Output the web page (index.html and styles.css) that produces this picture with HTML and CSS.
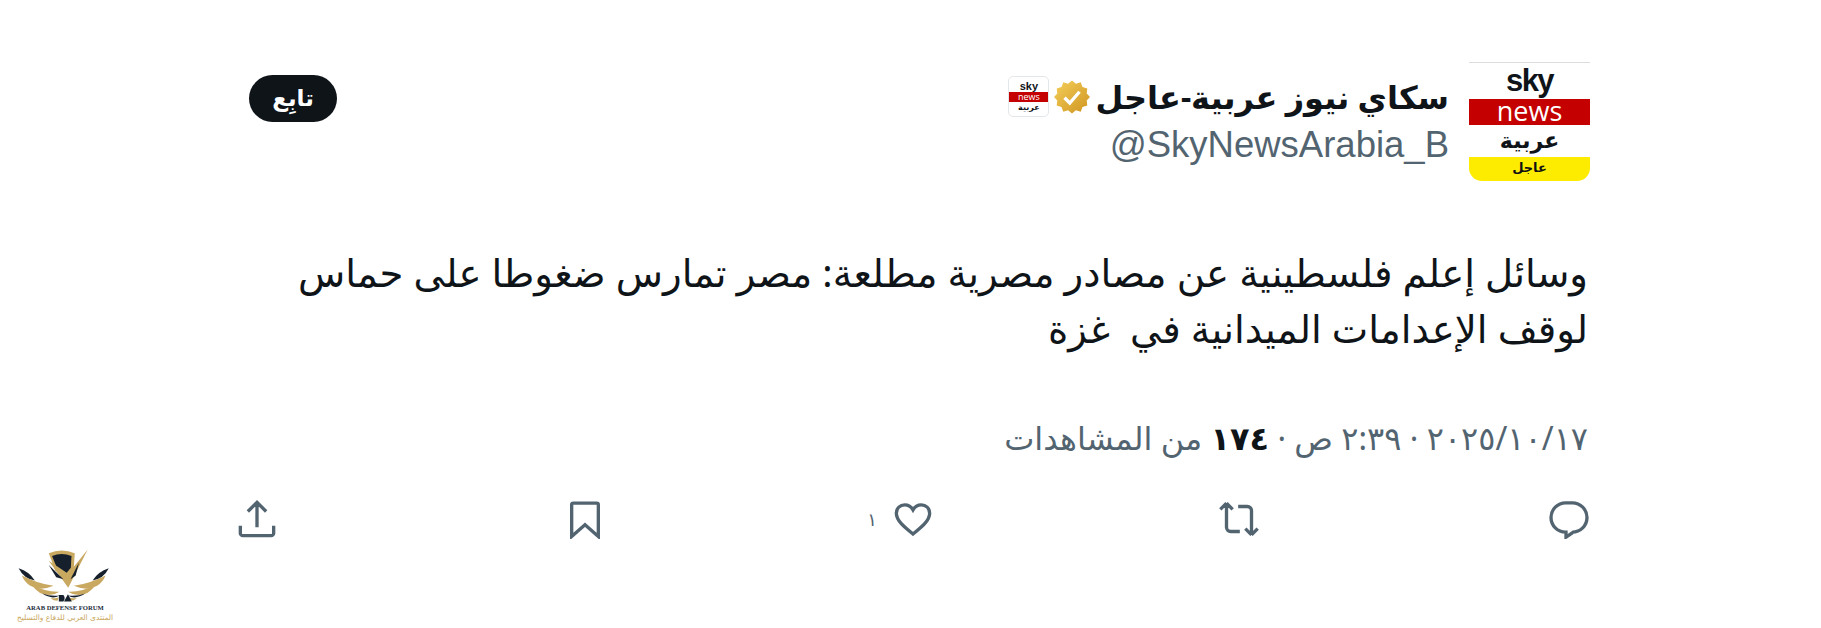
FILE: index.html
```html
<!DOCTYPE html>
<html lang="ar" dir="rtl">
<head>
<meta charset="utf-8">
<title>Tweet</title>
<link rel="stylesheet" href="styles.css">
</head>
<body>
<main class="tweet">
  <header class="head">
    <div class="avatar">
      <div class="av-sky" dir="ltr">sky</div>
      <div class="av-news" dir="ltr">news</div>
      <div class="av-ar">عربية</div>
      <div class="av-tag">عاجل</div>
    </div>
    <div class="who">
      <div class="name-row">
        <span class="name">سكاي نيوز عربية-عاجل</span>
        <svg class="verified" viewBox="0 0 24 24" aria-hidden="true">
          <defs><linearGradient id="gold" x1="0" y1="0" x2="1" y2="1"><stop offset="0" stop-color="#f4cf5a"/><stop offset="1" stop-color="#cf9420"/></linearGradient></defs>
          <path fill="url(#gold)" d="M12 1l2.600 2.100 3.200-.9 1.200 3.100 3.200 1-.4 3.300L24 12l-2.200 2.400.4 3.300-3.200 1-1.200 3.100-3.200-.9L12 23l-2.600-2.100-3.200.9-1.200-3.100-3.200-1 .4-3.300L0 12l2.200-2.400-.4-3.300 3.200-1 1.200-3.100 3.200.9z"/>
          <path fill="none" stroke="#fff" stroke-width="2.200" d="M7 12.500l3.500 3.500L17 8.500"/>
        </svg>
        <div class="mini">
          <div class="mini-sky" dir="ltr">sky</div>
          <div class="mini-news" dir="ltr">news</div>
          <div class="mini-ar">عربية</div>
        </div>
      </div>
      <div class="handle" dir="ltr">@SkyNewsArabia_B</div>
    </div>
    <button class="follow">تابِع</button>
  </header>

  <p class="body-text">وسائل إعلم فلسطينية عن مصادر مصرية مطلعة: مصر تمارس ضغوطا على حماس<br>لوقف الإعدامات الميدانية في&nbsp; غزة</p>

  <div class="meta"><span>١٧&#x200F;/١٠&#x200F;/٢٠٢٥ · ٢:٣٩ ص · </span><b class="views">١٧٤</b><span> من المشاهدات</span></div>

  <nav class="actions">
    <svg class="ico" viewBox="0 0 24 24" aria-hidden="true"><path d="M10 2.300h4a8.800 8.800 0 0 1 0 17.600h-.2v3l-4.400-3h.6a8.800 8.800 0 0 1 0-17.600z" transform="translate(24 0) scale(-1 1)"/></svg>
    <svg class="ico ico-wide" viewBox="0 0 24 24" aria-hidden="true"><path d="M4.500 2.500L.8 6.200M4.500 2.500l3.700 3.700M4.500 3v14a2.500 2.500 0 0 0 2.500 2.500h5.500M11.500 4.500H17A2.500 2.500 0 0 1 19.500 7v14M19.500 21.500L15.800 17.800M19.500 21.500l3.700-3.700"/></svg>
    <div class="like">
      <svg class="ico" viewBox="0 0 24 24" aria-hidden="true"><path d="M12 21C7 17 2 13 2 8.500 2 5.500 4.300 3.500 7 3.500c2 0 3.900 1 5 3 1.100-2 3-3 5-3 2.700 0 5 2 5 5 0 4.500-5 8.500-10 12.500z"/></svg>
      <span class="like-n">١</span>
    </div>
    <svg class="ico" viewBox="0 0 24 24" aria-hidden="true"><path d="M5 2.500h14a1 1 0 0 1 1 1V22.500l-8-7-8 7V3.500a1 1 0 0 1 1-1z"/></svg>
    <svg class="ico" viewBox="0 0 24 24" aria-hidden="true"><path d="M12 2v15M6.500 7.500L12 2l5.500 5.500M2 16v4.500A1.500 1.500 0 0 0 3.500 22h17a1.500 1.500 0 0 0 1.500-1.500V16"/></svg>
  </nav>
</main>

<aside class="forum" dir="ltr">
  <svg class="forum-mark" viewBox="0 0 390 225" aria-hidden="true">
    <defs>
      <g id="wing">
        <path fill="#16202c" d="M52 118Q85 128 102 156Q68 150 52 118z"/>
        <path fill="#c9a860" d="M62 140Q110 165 160 172Q118 190 88 172Q70 160 62 140z"/>
        <path fill="#c9a860" d="M92 168Q135 192 178 190Q150 208 118 194Q102 184 92 168z"/>
        <path fill="#16202c" d="M125 196Q150 205 178 202Q155 216 125 196z"/>
        <path fill="#c9a860" d="M150 210Q160 212 175 208L172 218Q160 218 150 210z"/>
      </g>
    </defs>
    <path fill="#c9a860" d="M145 72Q185 55 225 72L222 120L200 150L165 125z"/>
    <path fill="#16202c" d="M155 80Q185 68 215 80L213 116L197 136L168 112z"/>
    <path fill="#c9a860" d="M145 95L205 178L265 60L205 135z"/>
    <path fill="#16202c" d="M145 108L190 152L168 146z"/>
    <path fill="#16202c" d="M238 100L228 140L212 152z"/>
    <use href="#wing"/>
    <use href="#wing" transform="translate(382 0) scale(-1 1)"/>
    <path fill="#16202c" d="M176 200h14q8 10 0 20h-14zM192 220l12-22 12 22z"/>
  </svg>
  <div class="forum-en">ARAB DEFENSE FORUM</div>
  <div class="forum-ar" dir="rtl">المنتدى العربي للدفاع والتسليح</div>
</aside>
</body>
</html>
```
FILE: styles.css
```css
* { box-sizing: border-box; }
html, body { margin: 0; height: 100%; background: #fff; }
body {
  position: relative;
  height: 628px;
  overflow: hidden;
  font-family: "Noto Sans", "DejaVu Sans", sans-serif;
  color: #0f1419;
}
.tweet {
  width: 1352px;
  margin-right: 231px;
  padding-top: 62px;
}
.head { display: flex; align-items: flex-start; gap: 20px; height: 120px; }
.avatar {
  width: 121px;
  height: 119px;
  flex: none;
  display: flex;
  flex-direction: column;
  align-items: center;
  border-top: 1px solid #ddd;
  overflow: hidden;
}
.av-sky {
  font: 700 31px/36px "Liberation Sans", sans-serif;
  letter-spacing: -1.500px;
  height: 36px;
}
.av-news {
  width: 100%;
  height: 26px;
  background: #c40000;
  color: #fff;
  text-align: center;
  font: 400 27px/24px "Open Sans", sans-serif;
}
.av-ar { font: 700 22px/32px "DejaVu Sans", sans-serif; height: 32px; }
.av-tag {
  width: 100%;
  flex: 1;
  background: #fdec00;
  border-radius: 0 0 13px 13px;
  text-align: center;
  font: 700 13px/22px "DejaVu Sans", sans-serif;
  color: #111;
}
.who { flex: 1; padding-top: 13px; }
.name-row { display: flex; align-items: center; gap: 3px; height: 43px; }
.name { font-size: 32px; font-weight: 700; line-height: 43px; }
.verified { width: 36px; height: 36px; flex: none; margin-right: 2px; }
.mini {
  width: 41px;
  height: 41px;
  border: 1px solid #e4e7ea;
  border-radius: 5px;
  display: flex;
  flex-direction: column;
  align-items: center;
  overflow: hidden;
  margin-right: 2px;
}
.mini-sky { font: 700 11px/13px "Liberation Sans", sans-serif; height: 12px; margin-top: 3px; }
.mini-news { width: 100%; height: 10px; background: #c40000; color: #fff; text-align: center; font: 400 9px/10px "Open Sans", sans-serif; }
.mini-ar { font: 700 8px/12px "DejaVu Sans", sans-serif; }
.handle {
  font: 400 36.500px/40px "Liberation Sans", sans-serif;
  color: #536471;
  margin-top: 7px;
  width: max-content;
}
.follow {
  flex: none;
  width: 88px;
  height: 47px;
  margin-top: 13px;
  margin-left: 11px;
  border: 0;
  border-radius: 24px;
  background: #0f1419;
  color: #fff;
  font: 700 23px/47px "DejaVu Sans", sans-serif;
  padding: 0;
}
.body-text {
  margin: 62px 2px 0 0;
  font-size: 38.700px;
  line-height: 56px;
  font-weight: 400;
}
.meta { margin-top: 60px; font-size: 32px; line-height: 44px; color: #536471; margin-right: 2px; }
.views { color: #0f1419; font-weight: 700; }
.actions {
  display: grid;
  grid-template-columns: repeat(4, 328px) 40px;
  margin-top: 39px;
  margin-right: 1px;
}
.ico {
  width: 40px;
  height: 40px;
  flex: none;
  fill: none;
  stroke: #536471;
  stroke-width: 2;
  display: block;
}
.ico-wide { width: 44px; }
.like { display: flex; align-items: center; gap: 16px; }
.like-n { font-size: 18px; color: #536471; }
.forum {
  position: absolute;
  left: 0;
  top: 530px;
  width: 130px;
  display: flex;
  flex-direction: column;
  align-items: center;
}
.forum-mark { width: 130px; height: 73px; display: block; }
.forum-en { font: 700 6.600px/9px "Liberation Serif", serif; color: #1c2b3a; white-space: nowrap; }
.forum-ar { font: 400 7.500px/12px "DejaVu Sans", sans-serif; color: #c9a75e; white-space: nowrap; }
```
